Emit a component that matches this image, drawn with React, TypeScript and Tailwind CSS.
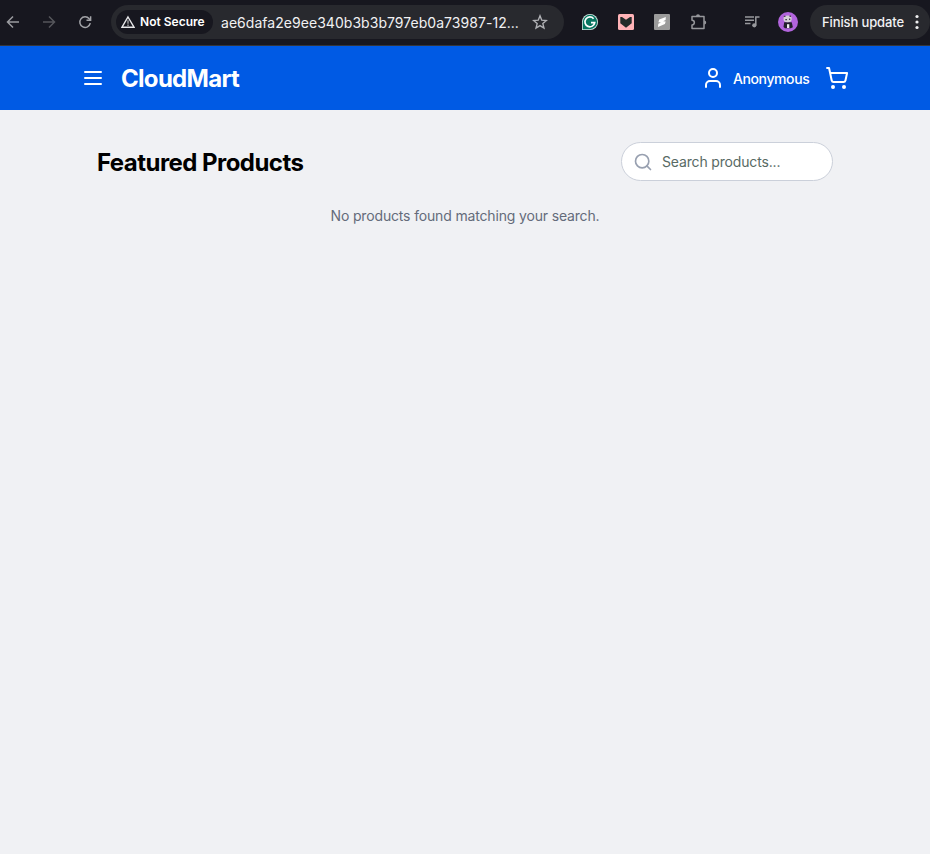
import React from "react";
import { ShoppingCart, User, Search } from "lucide-react";

function BrowserBar() {
  return (
    <div className="flex h-[46px] shrink-0 items-center border-b border-[#35363a] bg-[#17171f] pb-px">
      <svg className="ml-[5px] size-4 shrink-0" viewBox="0 0 16 16" fill="none" stroke="#9b9ca0" strokeWidth="1.5">
        <path d="M14 8H3M8 2.5 2.5 8 8 13.5" />
      </svg>
      <svg className="ml-5 size-4 shrink-0" viewBox="0 0 16 16" fill="none" stroke="#55565b" strokeWidth="1.5">
        <path d="M2 8h11M8 2.5 13.5 8 8 13.5" />
      </svg>
      <svg className="ml-5 size-4 shrink-0" viewBox="0 0 16 16" fill="none" stroke="#a3a4a8" strokeWidth="1.5">
        <path d="M13.3 9.2A5.3 5.3 0 1 1 12.2 4.7L13.5 6" />
        <path d="M13.6 2.2v4.1H9.5" />
      </svg>

      <div className="ml-[18px] flex h-[34px] w-[453px] shrink-0 items-center rounded-full bg-[#28292e] pl-[5px]">
        <div className="flex h-6 w-[97px] shrink-0 items-center rounded-full bg-[#17171f] pl-[5px]">
          <svg className="h-3.5 w-[14px] shrink-0" viewBox="0 0 14 14">
            <path d="M7 2 13 12.2H1Z" fill="none" stroke="#e6e6e8" strokeWidth="1.4" />
            <path d="M7 5.3v3.4M7 9.6v1.4" stroke="#a8a8ac" strokeWidth="1.3" />
          </svg>
          <span className="ml-[5px] whitespace-nowrap text-[12px] font-semibold tracking-[0.02px] text-white">Not Secure</span>
        </div>
        <span className="ml-[8px] w-[299px] shrink-0 whitespace-nowrap text-[14px] tracking-[0.04px] text-[#f1f1f3]">
          ae6dafa2e9ee340b3b3b797eb0a73987-12...
        </span>
        <svg className="ml-[12px] size-4 shrink-0" viewBox="0 0 16 16" fill="none" stroke="#b0b1b5" strokeWidth="1.4">
          <path d="m8 1.8 1.75 4.35 4.7.35-3.6 3.05 1.1 4.55L8 11.65 4.05 14.1l1.1-4.55-3.6-3.05 4.7-.35Z" />
        </svg>
      </div>

      <svg className="ml-[18px] size-4 shrink-0" viewBox="0 0 16 16">
        <path d="M8 0a8 8 0 1 1 0 16H0V8a8 8 0 0 1 8-8Z" fill="#d5e9e4" />
        <path d="M8 .8A7.2 7.2 0 1 1 8 15.2H.8V8A7.2 7.2 0 0 1 8 .8Z" fill="#087560" />
        <path d="M11.6 4.7A4.9 4.9 0 1 0 12.7 8.6H9" fill="none" stroke="#fff" strokeWidth="1.7" />
      </svg>
      <svg className="ml-5 size-4 shrink-0" viewBox="0 0 16 16">
        <rect width="16" height="16" rx="1.5" fill="#ffb3b7" />
        <path d="M2.3 3 4 3 8 5.8 12 3h1.7v6.2L8 13.7 2.3 9.2Z" fill="#222b29" />
      </svg>
      <svg className="ml-5 size-4 shrink-0" viewBox="0 0 16 16">
        <rect width="16" height="16" rx="1" fill="#9b9b9b" />
        <path d="M11.8 3 5.2 5.6 4.4 8.2 7 8.5 4.3 9.8 4 13 10.9 10 11.7 7.6 9 7.2 11.6 5.9Z" fill="#fff" />
        <path d="m6.4 7.3 3.4 1" stroke="#fff" strokeWidth="1" />
      </svg>
      <svg className="ml-[20px] h-[18px] w-[18px] shrink-0" viewBox="0 0 18 18">
        <path d="M2 3.5h12v12H2v-3.6a2.3 2.3 0 0 0 0-4.7Z" fill="none" stroke="#96979b" strokeWidth="1.5" strokeLinejoin="round" />
        <path d="M6 3.3a2 2 0 0 1 4 0ZM14.2 7.5a2 2 0 0 1 0 4Z" fill="#96979b" />
      </svg>

      <svg className="ml-[36px] size-4 shrink-0" viewBox="0 0 16 16" fill="none" stroke="#98999d" strokeWidth="1.5">
        <path d="M1 3h9M1 6.2h9M1 9.4h5.5" />
        <circle cx="10.3" cy="11.3" r="2.1" fill="#98999d" stroke="none" />
        <path d="M11.8 11.3V3h3.7" />
      </svg>
      <svg className="ml-[18px] size-5 shrink-0" viewBox="0 0 20 20">
        <circle cx="10" cy="10" r="10" fill="#b264dd" />
        <path d="M6.2 10.2h7.5l1.2 5-2.2 1.1H7L5.5 15Z" fill="#22202b" />
        <ellipse cx="9.6" cy="6.9" rx="4.1" ry="3.3" fill="#d5d1d7" />
        <path d="M9 12.2h2.3v3.8H9Z" fill="#f1edf2" />
        <path d="M5.8 3.8h1.7v1.2H5.8ZM11.5 3.5h1.5v1.5h-1.5ZM7.3 7h1.7v1.3H7.3ZM11 6.6h1.3v1.3H11Z" fill="#4a4551" />
      </svg>
      <div className="ml-3 flex h-[34px] w-[120px] shrink-0 items-center rounded-full bg-[#28292e] pl-3">
        <span className="mt-px w-[82px] whitespace-nowrap text-[13px] font-medium tracking-[-0.12px] text-[#f1f1f3]">Finish update</span>
        <svg className="ml-[11px] h-4 w-1" viewBox="0 0 4 16" fill="#eeeeef">
          <circle cx="2" cy="2.5" r="1.6" />
          <circle cx="2" cy="8" r="1.6" />
          <circle cx="2" cy="13.5" r="1.6" />
        </svg>
      </div>
    </div>
  );
}

function StoreHeader() {
  return (
    <header className="flex h-16 shrink-0 items-center bg-[#005ae4] px-[81px] text-white">
      <svg className="size-6" viewBox="0 0 24 24" fill="none" stroke="currentColor" strokeWidth="2" strokeLinecap="round">
        <path d="M4 6h16M4 12h16M4 18h16" />
      </svg>
      <h1 className="ml-4 mt-px whitespace-nowrap text-[24px] font-bold leading-8 tracking-[-0.7px]">CloudMart</h1>
      <div className="ml-auto flex items-center">
        <User className="size-6" />
        <span className="ml-2 mt-0.5 w-[76px] whitespace-nowrap text-[14px] font-medium leading-5 tracking-[-0.4px]">Anonymous</span>
        <ShoppingCart className="ml-4 size-6" />
      </div>
    </header>
  );
}

export default function App() {
  return (
    <div className="flex h-[854px] w-[930px] flex-col overflow-hidden bg-[#f0f1f4] font-['Inter','Liberation_Sans',sans-serif]">
      <BrowserBar />
      <StoreHeader />
      <main className="flex-1 px-[97px] pt-8">
        <div className="flex h-[39px] items-center justify-between">
          <h2 className="mt-[3px] whitespace-nowrap text-[24px] font-bold leading-8 tracking-[-0.54px] text-black">Featured Products</h2>
          <label className="flex h-[39px] w-[212px] items-center rounded-full border border-[#cbd0da] bg-white pl-[11px]">
            <Search className="size-5 shrink-0 text-[#98a0b0]" />
            <input
              className="ml-[9px] w-[150px] bg-transparent text-[14px] leading-5 tracking-[-0.16px] outline-none placeholder:text-[#586a64] placeholder:opacity-100"
              placeholder="Search products..."
            />
          </label>
        </div>
        <p className="mt-[25px] text-center text-[14px] leading-5 tracking-[-0.16px] text-[#646b7a]">No products found matching your search.</p>
      </main>
    </div>
  );
}
